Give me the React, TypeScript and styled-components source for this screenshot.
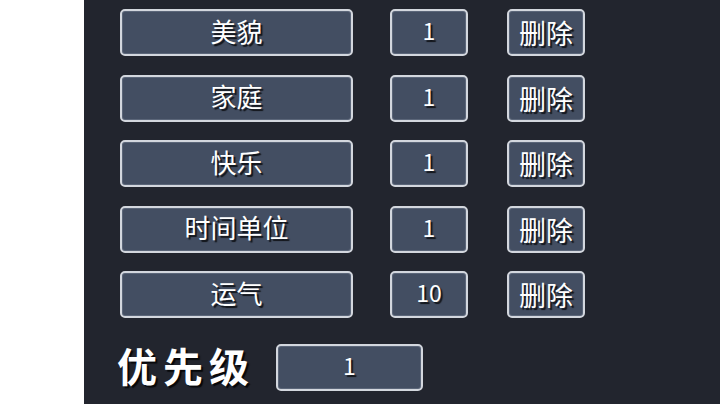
import React from 'react'
import styled, { createGlobalStyle } from 'styled-components'

const GlobalStyle = createGlobalStyle`
  html, body {
    margin: 0;
    padding: 0;
    background: #ffffff;
  }
  body {
    font-family: "Noto Sans CJK SC", "Noto Sans", sans-serif;
  }
`

const Page = styled.div`
  width: 720px;
  height: 404px;
  display: flex;
  overflow: hidden;
`

const Panel = styled.div`
  margin-left: 84px;
  flex: 1;
  background-color: #22252e;
  padding: 9px 0 0 36px;
  display: flex;
  flex-direction: column;
  gap: 18.5px;
`

const Row = styled.div`
  display: flex;
  align-items: center;
  height: 47px;
`

const Box = styled.div<{ $width: number; $gap?: number; $size?: number; $lift?: number }>`
  box-sizing: border-box;
  width: ${p => p.$width}px;
  height: 47px;
  margin-left: ${p => p.$gap || 0}px;
  padding-bottom: ${p => p.$lift || 0}px;
  background-color: #434e62;
  border: 2px solid #d3d7de;
  border-radius: 5px;
  box-shadow: inset 0 0 0 1px #5b6679;
  display: flex;
  align-items: center;
  justify-content: center;
  color: #ffffff;
  font-family: "Noto Sans CJK SC", "Noto Sans", sans-serif;
  font-size: ${p => p.$size || 26}px;
  text-shadow: 2px 2px 1px rgba(0, 0, 0, 0.75);
  line-height: 1;
`

const PriorityRow = styled.div`
  display: flex;
  align-items: center;
  height: 47px;
  margin-top: 7px;
`

const PriorityLabel = styled.div`
  margin-left: -3px;
  padding-bottom: 4px;
  color: #ffffff;
  font-family: "Noto Sans CJK SC", sans-serif;
  font-size: 40px;
  font-weight: 700;
  letter-spacing: 6px;
  text-shadow: 2px 2px 1px rgba(0, 0, 0, 0.8);
  line-height: 1;
  width: 159px;
`

const items = [
  { name: '美貌', value: '1' },
  { name: '家庭', value: '1' },
  { name: '快乐', value: '1' },
  { name: '时间单位', value: '1' },
  { name: '运气', value: '10' },
]

export default function App() {
  return (
    <>
      <GlobalStyle />
      <Page>
        <Panel>
          {items.map(item => (
            <Row key={item.name}>
              <Box $width={233} $lift={4}>{item.name}</Box>
              <Box $width={78} $gap={37} $size={23} $lift={4}>{item.value}</Box>
              <Box $width={78} $gap={39} $size={27} $lift={0}>删除</Box>
            </Row>
          ))}
          <PriorityRow>
            <PriorityLabel>优先级</PriorityLabel>
            <Box $width={147} $size={23} $lift={4}>1</Box>
          </PriorityRow>
        </Panel>
      </Page>
    </>
  )
}
